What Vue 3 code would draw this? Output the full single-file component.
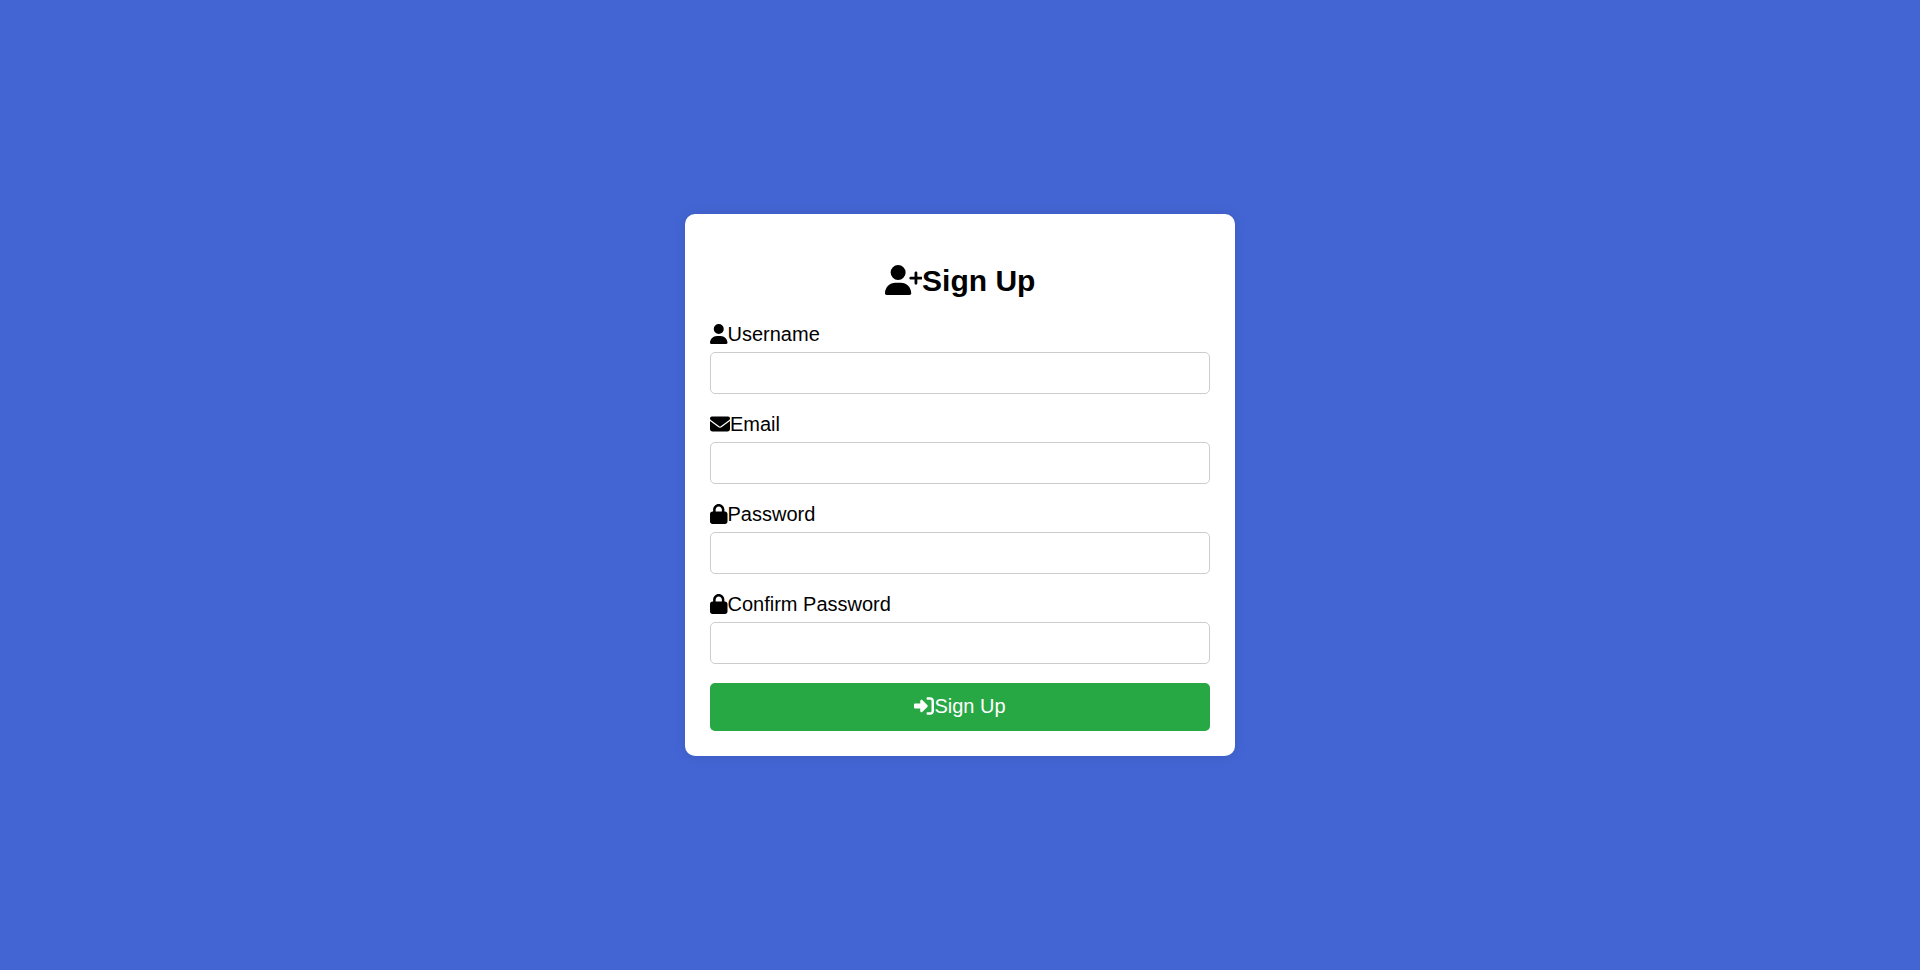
<script setup>
import { reactive } from 'vue'

const icons = {
  user: {
    box: '0 0 448 512',
    d: 'M224 256A128 128 0 1 0 224 0a128 128 0 1 0 0 256zm-45.7 48C79.8 304 0 383.8 0 482.3C0 498.7 13.3 512 29.7 512l388.6 0c16.4 0 29.7-13.3 29.7-29.7C448 383.8 368.2 304 269.7 304l-91.4 0z'
  },
  envelope: {
    box: '0 0 512 512',
    d: 'M48 64C21.5 64 0 85.5 0 112c0 15.1 7.1 29.3 19.2 38.4L236.8 313.6c11.4 8.5 27 8.5 38.4 0L492.8 150.4c12.1-9.1 19.2-23.3 19.2-38.4c0-26.5-21.5-48-48-48L48 64zM0 176L0 384c0 35.3 28.7 64 64 64l384 0c35.3 0 64-28.7 64-64l0-208L294.4 339.2c-22.8 17.1-54 17.1-76.8 0L0 176z'
  },
  lock: {
    box: '0 0 448 512',
    d: 'M144 144l0 48 160 0 0-48c0-44.2-35.8-80-80-80s-80 35.8-80 80zM80 192l0-48C80 64.5 144.5 0 224 0s144 64.5 144 144l0 48 16 0c35.3 0 64 28.7 64 64l0 192c0 35.3-28.7 64-64 64L64 512c-35.3 0-64-28.7-64-64L0 256c0-35.3 28.7-64 64-64l16 0z'
  }
}

const fields = [
  { id: 'username', label: 'Username', type: 'text', icon: icons.user },
  { id: 'email', label: 'Email', type: 'email', icon: icons.envelope },
  { id: 'password', label: 'Password', type: 'password', icon: icons.lock },
  { id: 'confirm-password', label: 'Confirm Password', type: 'password', icon: icons.lock }
]

const form = reactive({ username: '', email: '', password: '', 'confirm-password': '' })
</script>

<template>
  <main class="page">
    <form class="card" @submit.prevent>
      <h2 class="title"><svg class="icon" viewBox="0 0 640 512" aria-hidden="true"><path d="M96 128a128 128 0 1 1 256 0A128 128 0 1 1 96 128zM0 482.3C0 383.8 79.8 304 178.3 304l91.4 0C368.2 304 448 383.8 448 482.3c0 16.4-13.3 29.7-29.7 29.7L29.7 512C13.3 512 0 498.7 0 482.3zM504 312l0-64-64 0c-13.3 0-24-10.7-24-24s10.7-24 24-24l64 0 0-64c0-13.3 10.7-24 24-24s24 10.7 24 24l0 64 64 0c13.3 0 24 10.7 24 24s-10.7 24-24 24l-64 0 0 64c0 13.3-10.7 24-24 24s-24-10.7-24-24z" /></svg>Sign Up</h2>
      <div v-for="field in fields" :key="field.id" class="field">
        <label class="label" :for="field.id"><svg class="icon" :viewBox="field.icon.box" aria-hidden="true"><path :d="field.icon.d" /></svg>{{ field.label }}</label>
        <input :id="field.id" v-model="form[field.id]" class="input" :type="field.type" :name="field.id" />
      </div>
      <button class="submit" type="submit"><svg class="icon" viewBox="0 0 512 512" aria-hidden="true"><path d="M217.9 105.9L340.7 228.7c7.2 7.2 11.3 17.1 11.3 27.3s-4.1 20.1-11.3 27.3L217.9 406.1c-6.4 6.4-15 9.9-24 9.9c-18.7 0-33.9-15.2-33.9-33.9l0-62.1L32 320c-17.7 0-32-14.3-32-32l0-64c0-17.7 14.3-32 32-32l128 0 0-62.1c0-18.7 15.2-33.9 33.9-33.9c9 0 17.6 3.6 24 9.9zM352 416l64 0c17.7 0 32-14.3 32-32l0-256c0-17.7-14.3-32-32-32l-64 0c-17.7 0-32-14.3-32-32s14.3-32 32-32l64 0c53 0 96 43 96 96l0 256c0 53-43 96-96 96l-64 0c-17.7 0-32-14.3-32-32s14.3-32 32-32z" /></svg>Sign Up</button>
    </form>
  </main>
</template>

<style>
body {
  margin: 0;
  background: #4365d3;
}
</style>

<style scoped>
.page {
  display: flex;
  align-items: center;
  justify-content: center;
  min-height: 100vh;
  font-family: "Liberation Sans", Arial, sans-serif;
  font-size: 20px;
  color: #000;
}

.card {
  box-sizing: border-box;
  width: 100%;
  max-width: 550px;
  padding: 25px;
  border-radius: 10px;
  background: #fff;
  box-shadow: 0 0 12px rgba(0, 0, 0, 0.1);
}

.title {
  margin: 25px 0;
  font-size: 30px;
  font-weight: 700;
  line-height: 34px;
  text-align: center;
}

.icon {
  height: 20px;
  vertical-align: -3px;
  fill: currentColor;
}

.title .icon {
  height: 30px;
  vertical-align: -4px;
}

.field {
  margin-bottom: 19px;
}

.label {
  display: block;
  margin-bottom: 6px;
  line-height: 23px;
}

.input {
  display: block;
  box-sizing: border-box;
  width: 100%;
  height: 42px;
  padding: 10px;
  border: 1px solid #ccc;
  border-radius: 5px;
  background: #fff;
  font: inherit;
}

.submit {
  display: block;
  width: 100%;
  padding: 12px 12px 13px;
  border: 0;
  border-radius: 5px;
  background: #28a745;
  color: #fff;
  font: inherit;
  line-height: 23px;
  text-align: center;
  cursor: pointer;
}
</style>
